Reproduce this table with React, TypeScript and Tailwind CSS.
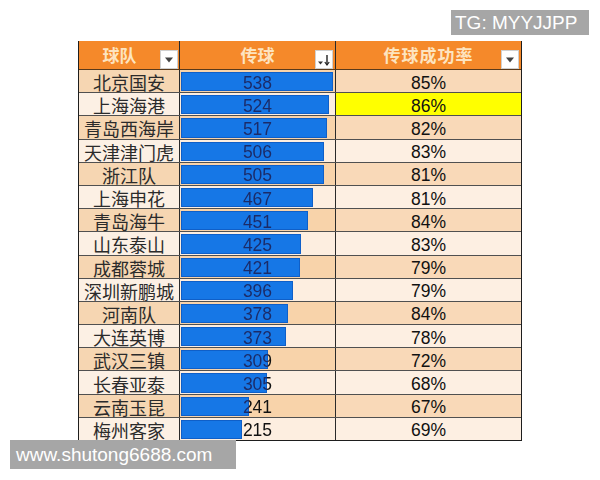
import React from 'react';

interface Row {
  team: string;
  passes: number;
  rate: string;
}

const rows: Row[] = [
  { team: '北京国安', passes: 538, rate: '85%' },
  { team: '上海海港', passes: 524, rate: '86%' },
  { team: '青岛西海岸', passes: 517, rate: '82%' },
  { team: '天津津门虎', passes: 506, rate: '83%' },
  { team: '浙江队', passes: 505, rate: '81%' },
  { team: '上海申花', passes: 467, rate: '81%' },
  { team: '青岛海牛', passes: 451, rate: '84%' },
  { team: '山东泰山', passes: 425, rate: '83%' },
  { team: '成都蓉城', passes: 421, rate: '79%' },
  { team: '深圳新鹏城', passes: 396, rate: '79%' },
  { team: '河南队', passes: 378, rate: '84%' },
  { team: '大连英博', passes: 373, rate: '78%' },
  { team: '武汉三镇', passes: 309, rate: '72%' },
  { team: '长春亚泰', passes: 305, rate: '68%' },
  { team: '云南玉昆', passes: 241, rate: '67%' },
  { team: '梅州客家', passes: 215, rate: '69%' },
];

const cjk = { fontFamily: '"Noto Sans CJK SC", "Noto Sans", sans-serif' };
const latin = { fontFamily: '"Liberation Sans", Arial, sans-serif' };

const FilterButton: React.FC<{ sorted?: boolean }> = ({ sorted }) => (
  <div className="w-[18px] h-[19px] bg-white border border-[#d0d0d0] flex items-center justify-center">
    {sorted ? (
      <svg width="14" height="14" viewBox="0 0 14 14">
        <path d="M1 8.5 L6 8.5 L3.5 11.5 Z" fill="#333" />
        <path d="M10 2 L10 12" stroke="#222" strokeWidth="1.4" />
        <path d="M7.8 9 L10 12 L12.2 9" stroke="#222" strokeWidth="1.2" fill="none" />
      </svg>
    ) : (
      <svg width="10" height="6" viewBox="0 0 10 6">
        <path d="M1 0.5 L9 0.5 L5 5.5 Z" fill="#444" />
      </svg>
    )}
  </div>
);

const MAX_BAR = 152;

const PassCell: React.FC<{ value: number; odd: boolean }> = ({ value, odd }) => {
  const width = Math.round((MAX_BAR * value) / 538);
  // text is navy where it lies on the bar, black past its end
  const textStyle = {
    ...latin,
    backgroundImage: `linear-gradient(to right, #1b2b68 ${width + 1}px, #111111 ${width + 1}px)`,
    WebkitBackgroundClip: 'text',
    backgroundClip: 'text',
    color: 'transparent',
  };
  return (
    <div className={`relative h-full border-r border-[#2a2a2a] ${odd ? 'bg-[#f8d3aa]' : 'bg-[#fdeee0]'}`}>
      <div
        className="absolute left-[1px] top-[2px] bottom-[1px] bg-[#1677e6] border border-[#0f5fc8]"
        style={{ width }}
      />
      <div
        className="absolute inset-0 pt-[3px] flex items-center justify-center text-[17.5px] leading-[20px]"
        style={textStyle}
      >
        {value}
      </div>
    </div>
  );
};

export default function App() {
  return (
    <div className="relative w-[600px] h-[480px] bg-white overflow-hidden">
      <div className="pt-[41px] pl-[78px]">
        <div className="w-[444px] border-l border-r border-b border-[#1e1e1e]">
          <div className="grid grid-cols-[101px_156px_185px] grid-rows-[28px] h-[29px] bg-[#f5892a] border-b border-[#5a3a1a]">
            <div className="flex items-end border-r border-[#2a2a2a] pr-[1px]" style={cjk}>
              <span className="flex-1 self-center text-center text-[17px] leading-[22px] font-bold text-[#fde4c0]">
                球队
              </span>
              <FilterButton />
            </div>
            <div className="flex items-end border-r border-[#2a2a2a] pr-[2px]" style={cjk}>
              <span className="flex-1 self-center text-center text-[17px] leading-[22px] font-bold text-[#fde4c0] pl-[20px]">
                传球
              </span>
              <FilterButton sorted />
            </div>
            <div className="flex items-end pr-[2px]" style={cjk}>
              <span className="flex-1 self-center text-center text-[17px] leading-[22px] font-bold text-[#fde4c0] pl-[20px] tracking-[1px]">
                传球成功率
              </span>
              <FilterButton />
            </div>
          </div>
          {rows.map((r, i) => {
            const odd = i % 2 === 0;
            const last = i === rows.length - 1;
            return (
              <div
                key={r.team}
                className={`grid grid-cols-[101px_156px_185px] ${
                  last ? 'h-[22.2px] grid-rows-[22.2px]' : 'h-[23.2px] grid-rows-[22.2px] border-b border-[#505050]'
                }`}
              >
                <div
                  className={`flex items-center justify-center pt-[2px] border-r border-[#2a2a2a] text-[18px] leading-[20px] text-[#2b2b2b] ${
                    odd ? 'bg-[#f6d6b2]' : 'bg-[#fcf0e4]'
                  }`}
                  style={cjk}
                >
                  {r.team}
                </div>
                <PassCell value={r.passes} odd={odd} />
                <div
                  className={`flex items-center justify-center pt-[3px] text-[17.5px] leading-[20px] text-[#111] ${
                    i === 1 ? 'bg-[#ffff00]' : odd ? 'bg-[#f9d9b8]' : 'bg-[#fdefe2]'
                  }`}
                  style={latin}
                >
                  {r.rate}
                </div>
              </div>
            );
          })}
        </div>
      </div>

      <div
        className="absolute left-[451px] top-[10px] w-[138px] h-[25px] bg-[#a6a6a6] flex items-center pl-[4px] text-[19px] leading-none text-white"
        style={latin}
      >
        TG: MYYJJPP
      </div>
      <div
        className="absolute left-[10px] top-[440px] w-[226px] h-[29px] bg-[#a6a6a6] flex items-center pl-[6px] text-[19px] leading-none text-white"
        style={latin}
      >
        www.shutong6688.com
      </div>
    </div>
  );
}
